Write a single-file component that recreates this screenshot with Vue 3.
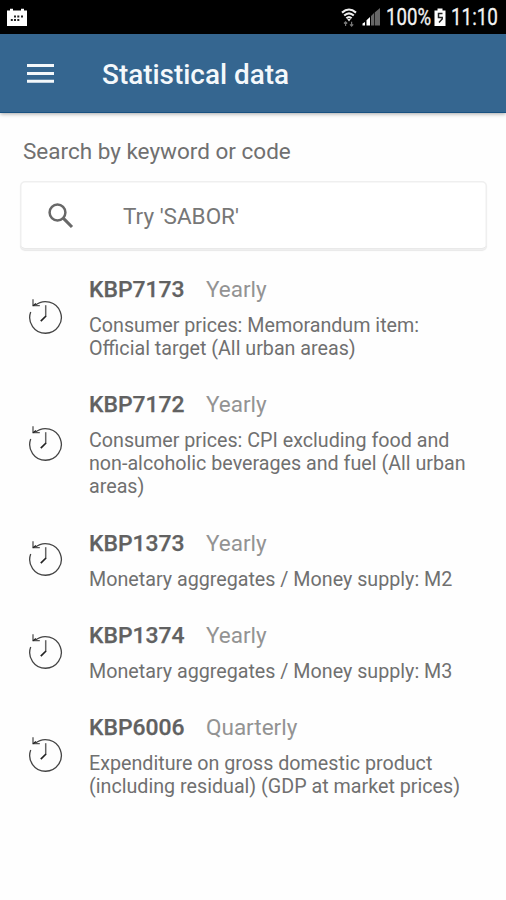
<script setup>
const items = [
  { code: 'KBP7173', freq: 'Yearly', lines: ['Consumer prices: Memorandum item:', 'Official target (All urban areas)'] },
  { code: 'KBP7172', freq: 'Yearly', lines: ['Consumer prices: CPI excluding food and', 'non-alcoholic beverages and fuel (All urban', 'areas)'] },
  { code: 'KBP1373', freq: 'Yearly', lines: ['Monetary aggregates / Money supply: M2'] },
  { code: 'KBP1374', freq: 'Yearly', lines: ['Monetary aggregates / Money supply: M3'] },
  { code: 'KBP6006', freq: 'Quarterly', lines: ['Expenditure on gross domestic product', '(including residual) (GDP at market prices)'] },
]
</script>

<template>
  <div class="screen">
    <div class="status">
      <svg class="calendar" width="20" height="19" viewBox="0 0 20 19">
        <path d="M0 2.5H3V0.8H6V2.5H14V0.8H17V2.5H20V18H0Z" fill="#fff" />
        <g fill="#222">
          <rect x="7" y="7.5" width="2" height="2" /><rect x="10.3" y="7.5" width="2" height="2" /><rect x="14" y="7.5" width="2" height="2" />
          <rect x="3.8" y="11" width="2" height="2" /><rect x="7" y="11" width="2" height="2" /><rect x="10.3" y="11" width="2" height="2" />
        </g>
      </svg>
      <svg class="wifi" width="16" height="19" viewBox="0 0 16 19">
        <g fill="none" stroke="#eee" stroke-width="2.1">
          <path d="M1 4.6Q8 -1.6 15 4.6" /><path d="M3.2 7.6Q8 3.2 12.8 7.6" /><path d="M5.4 10.2Q8 7.8 10.6 10.2" />
        </g>
        <path d="M6 10.8H10L8 13.4Z" fill="#eee" />
        <path d="M4.6 18V13.8M3 15.5L4.6 13.8L6.2 15.5M10.6 13.8V18M9 16.3L10.6 18L12.2 16.3" fill="none" stroke="#777" stroke-width="1.2" />
      </svg>
      <svg class="signal" width="19" height="18" viewBox="0 0 19 18">
        <path d="M0.5 17.5V15.5L3 14V17.5ZM4.5 17.5V12.3L8 9V17.5Z" fill="#fff" />
        <path d="M9 17.5V8L12 5V17.5ZM12.7 17.5V4.5L18 0V17.5Z" fill="#666" />
      </svg>
      <span class="percent">100%</span>
      <svg class="battery" width="12" height="19" viewBox="0 0 12 19">
        <path d="M3.5 0.5H8.5V2.5H11.5V18H0.5V2.5H3.5Z" fill="#fff" />
        <path d="M8.5 5.5H4.5V9.5H8.2V11L5 14.5" fill="none" stroke="#222" stroke-width="1.5" />
      </svg>
      <span class="clock">11:10</span>
    </div>
    <header class="bar">
      <svg class="menu" width="27" height="20" viewBox="0 0 27 20">
        <path d="M0 1.5H27M0 9.5H27M0 17.3H27" stroke="#f4f8fb" stroke-width="3" />
      </svg>
      <h1 class="title">Statistical data</h1>
    </header>
    <main>
      <div class="label"><span>Search by keyword or code</span></div>
      <div class="search">
        <svg class="glass" width="26" height="26" viewBox="0 0 26 26">
          <circle cx="9.5" cy="9.5" r="7.9" fill="none" stroke="#686868" stroke-width="2.5" />
          <path d="M15.2 15.2L24 24" stroke="#686868" stroke-width="3.1" />
        </svg>
        <span class="hint">Try 'SABOR'</span>
      </div>
      <ul class="list">
        <li v-for="item in items" :key="item.code" class="item">
          <svg class="history" width="36" height="36" viewBox="0 0 36 36">
            <path d="M7.2 7.5A15.8 15.8 0 1 1 2.7 14" fill="none" stroke="#444" stroke-width="1.3" />
            <path d="M5 1.2V7.7H11.8" fill="none" stroke="#555" stroke-width="1.3" />
            <path d="M5 7.7L8 5.6" stroke="#222" stroke-width="1.4" />
            <path d="M17.7 7.2V18.5" fill="none" stroke="#666" stroke-width="1.5" />
            <path d="M18 18L12.8 23.2" stroke="#222" stroke-width="1.7" />
          </svg>
          <div class="body">
            <div class="head"><span class="code">{{ item.code }}</span><span class="freq">{{ item.freq }}</span></div>
            <div class="desc"><div v-for="line in item.lines" :key="line">{{ line }}</div></div>
          </div>
        </li>
      </ul>
    </main>
  </div>
</template>

<style>
body { background: #fefefe; }
</style>

<style scoped>
.screen { width: 506px; height: 900px; overflow: hidden; background: #fefefe; font-family: Roboto, sans-serif; color: #707070; }
.status { height: 34px; background: #000; display: flex; align-items: center; color: #f2f2f2; padding: 0 8px 0 7px; }
.calendar { margin-right: auto; }
.wifi { margin-right: 5px; }
.signal { margin-right: 5px; }
.percent, .clock { font-size: 23px; line-height: 34px; white-space: nowrap; transform-origin: left center; padding-top: 2px; -webkit-text-stroke: 0.3px #f2f2f2; }
.percent { width: 44px; margin-right: 4px; transform: scaleX(0.81); }
.battery { margin-right: 5px; }
.clock { width: 47px; transform: scaleX(0.82); }
.bar { height: 79px; background: #356690; display: flex; align-items: center; padding-left: 27px; box-shadow: inset 0 -1px #185181, 0 1px 4px rgba(0, 0, 0, 0.35); }
.title { margin: 2px 0 0 48px; font-size: 27.9px; font-weight: 500; line-height: 34px; color: #f4f8fb; white-space: nowrap; }
.label { padding: 22px 0 0 23px; height: 46px; font-size: 22.5px; line-height: 33px; white-space: nowrap; }
.label { box-sizing: border-box; height: 68px; }
.search { margin: 0 19px 0 20px; height: 69px; display: flex; align-items: center; padding-left: 28px; border-radius: 5px; background: #fff; box-shadow: inset 0 0 0 1.5px #efefef, inset 0 -2px #e2e2e2, 0 1px 1px #e8e8e8; }
.glass { margin-top: 1px; }
.hint { margin: 0 0 0 49px; font-size: 22.5px; line-height: 30px; color: #777; white-space: nowrap; }
.list { list-style: none; margin: 0; padding: 9.5px 0 0; }
.item { display: flex; align-items: center; padding-left: 28px; }
.history { flex: none; margin-bottom: 2.5px; }
.body { padding: 17.4px 0 14.9px 25px; }
.head { display: flex; font-size: 22.9px; line-height: 26px; white-space: nowrap; }
.code { width: 117px; font-weight: 500; color: #616161; -webkit-text-stroke: 0.25px #616161; }
.freq { color: #939393; font-size: 22.5px; line-height: 25px; }
.desc { margin-top: 11px; font-size: 19.7px; line-height: 23.05px; white-space: nowrap; }
</style>
